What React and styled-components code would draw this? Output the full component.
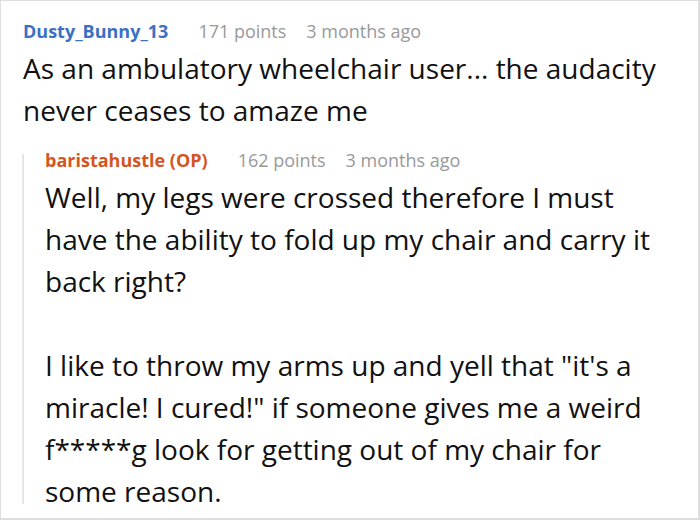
import React from "react";
import styled, { createGlobalStyle } from "styled-components";

const Global = createGlobalStyle`
  html, body { margin: 0; padding: 0; background: #fff; }
  body { font-family: "Open Sans", "Noto Sans", sans-serif; }
`;

const Frame = styled.div`
  box-sizing: border-box;
  width: 700px;
  height: 520px;
  border: 1px solid #dedede;
  border-right-width: 2px;
  border-bottom-width: 2px;
  padding: 18px 30px 0 22px;
  overflow: hidden;
  background: #fff;
`;

const Comment = styled.div`
  display: flex;
  flex-direction: column;
`;

const Meta = styled.div`
  display: flex;
  align-items: baseline;
  gap: 20px;
  font-size: 18px;
  line-height: 24px;
`;

const Author = styled.span`
  font-weight: 700;
  color: ${(p) => (p.$op ? "#d4561f" : "#3b70c3")};
  margin-right: 10px;
`;

const Info = styled.span`
  color: #999;
`;

const Body = styled.div`
  font-size: 28px;
  line-height: 42px;
  color: #111;
  margin-top: 4px;
  p { margin: 0; }
  p + p { margin-top: 42px; }
`;

const Reply = styled.div`
  position: relative;
  margin-top: 17px;
  padding-left: 22px;
  &::before {
    content: "";
    position: absolute;
    left: -1px;
    top: 6px;
    bottom: 8px;
    width: 2px;
    background: #e6e6e6;
  }
`;

function Entry({ author, op, points, time, children }) {
  return (
    <Comment>
      <Meta>
        <Author $op={op}>{author}</Author>
        <Info>{points} points</Info>
        <Info>{time}</Info>
      </Meta>
      <Body>{children}</Body>
    </Comment>
  );
}

export default function App() {
  return (
    <>
      <Global />
      <Frame>
        <Entry author="Dusty_Bunny_13" points={171} time="3 months ago">
          <p>As an ambulatory wheelchair user... the audacity never ceases to amaze me</p>
        </Entry>
        <Reply>
          <Entry author="baristahustle (OP)" op points={162} time="3 months ago">
            <p>Well, my legs were crossed therefore I must have the ability to fold up my chair and carry it back right?</p>
            <p>I like to throw my arms up and yell that "it's a miracle! I cured!" if someone gives me a weird f*****g look for getting out of my chair for some reason.</p>
          </Entry>
        </Reply>
      </Frame>
    </>
  );
}
